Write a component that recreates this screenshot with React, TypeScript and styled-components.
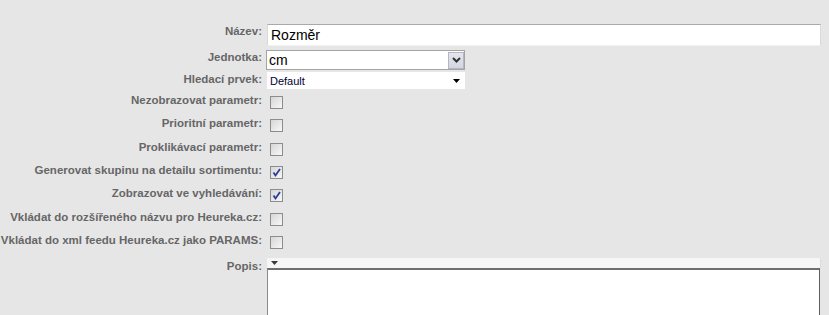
import { styled, createGlobalStyle } from 'styled-components'

const GlobalStyle = createGlobalStyle`
  html, body {
    margin: 0;
    padding: 0;
    background: #e6e6e6;
    font-family: 'Liberation Sans', Arial, sans-serif;
  }
`

type Flag = { label: string; checked: boolean }

const flags: Flag[] = [
  { label: 'Nezobrazovat parametr:', checked: false },
  { label: 'Prioritní parametr:', checked: false },
  { label: 'Proklikávací parametr:', checked: false },
  { label: 'Generovat skupinu na detailu sortimentu:', checked: true },
  { label: 'Zobrazovat ve vyhledávání:', checked: true },
  { label: 'Vkládat do rozšířeného názvu pro Heureka.cz:', checked: false },
  { label: 'Vkládat do xml feedu Heureka.cz jako PARAMS:', checked: false },
]

const App = () => {
  return (
    <Page>
      <GlobalStyle />
      <Row $h={26}>
        <Label>Název:</Label>
        <TextInput>Rozměr</TextInput>
      </Row>
      <Row $h={22}>
        <Label>Jednotka:</Label>
        <UnitSelect>
          <span>cm</span>
          <SelectButton>
            <svg width="9" height="6" viewBox="0 0 9 6">
              <path d="M1 1 L4.5 4.5 L8 1" fill="none" stroke="#333" strokeWidth="2" />
            </svg>
          </SelectButton>
        </UnitSelect>
      </Row>
      <Row $h={21}>
        <Label>Hledací prvek:</Label>
        <PlainSelect>
          <span>Default</span>
          <svg width="7" height="4" viewBox="0 0 7 4">
            <path d="M0 0 H7 L3.5 4 Z" fill="#000" />
          </svg>
        </PlainSelect>
      </Row>
      {flags.map((item, idx) => (
        <Row key={idx} $h={23.33}>
          <Label>{item.label}</Label>
          <Check checked={item.checked} />
        </Row>
      ))}
      <Row $h={60} style={{ marginTop: 2 }}>
        <Label $top={1}>Popis:</Label>
        <Editor>
          <Toolbar>
            <svg width="7" height="4" viewBox="0 0 7 4">
              <path d="M0 0 H7 L3.5 4 Z" fill="#3a3a3a" />
            </svg>
          </Toolbar>
          <EditArea />
        </Editor>
      </Row>
    </Page>
  )
}

const Check = ({ checked }: { checked: boolean }) => (
  <Box>
    {checked && (
      <svg width="11" height="11" viewBox="0 0 11 11">
        <path d="M2.5 5.5 L4.5 8.5 L9 2" fill="none" stroke="#2b3d92" strokeWidth="1.8" />
      </svg>
    )}
  </Box>
)

export default App

const Page = styled.div`
  padding: 24px 8px 0 0;
  height: 291px;
  overflow: hidden;
`

const Row = styled.div<{ $h: number }>`
  display: grid;
  grid-template-columns: 262px 1fr;
  column-gap: 4px;
  align-items: start;
  height: ${props => props.$h}px;
`

const Label = styled.div<{ $top?: number }>`
  text-align: right;
  font-size: 11.5px;
  line-height: 14px;
  font-weight: bold;
  color: #666666;
  white-space: nowrap;
  padding-top: ${props => props.$top ?? 0}px;
`

const TextInput = styled.div`
  margin-left: 1px;
  height: 20px;
  box-sizing: content-box;
  background: #ffffff;
  border: 1px solid;
  border-color: #a9a9a9 #dadada #f2f2f2 #dadada;
  font-size: 14px;
  line-height: 20px;
  padding-left: 3px;
  color: #000;
`

const UnitSelect = styled.div`
  width: 197px;
  height: 18px;
  display: flex;
  align-items: center;
  justify-content: space-between;
  background: #ffffff;
  border: 1px solid #a3a3a3;
  font-size: 14px;
  color: #000;

  > span {
    padding-left: 2px;
    line-height: 18px;
  }
`

const SelectButton = styled.div`
  width: 16px;
  height: 17px;
  display: flex;
  align-items: center;
  justify-content: center;
  background: linear-gradient(#e4e6ee, #d3d6e0);
  border: 1px solid #b4b7c2;
  box-sizing: border-box;
`

const PlainSelect = styled.div`
  margin-left: 1px;
  width: 198px;
  height: 17px;
  box-sizing: border-box;
  display: flex;
  align-items: center;
  justify-content: space-between;
  background: #ffffff;
  padding: 0 5px 0 3px;
  font-size: 11px;
  color: #000033;
`

const Box = styled.div`
  margin: 3px 0 0 4px;
  width: 13px;
  height: 13px;
  box-sizing: border-box;
  border: 1px solid #8c8c8c;
  background: linear-gradient(135deg, #d6d6d6, #f7f7f7);
  display: flex;
  align-items: center;
  justify-content: center;
`

const Editor = styled.div`
  margin-left: 1px;
  display: flex;
  flex-direction: column;
`

const Toolbar = styled.div`
  height: 10px;
  background: #f6f6f6;
  border-right: 1px solid #dcdcdc;
  padding-left: 4px;
  display: flex;
  align-items: center;
`

const EditArea = styled.div`
  height: 60px;
  background: #ffffff;
  border-top: 2px solid #6e6e6e;
  border-left: 1px solid #8a8a8a;
  border-right: 1px solid #5e5e5e;
  margin-right: 1px;
`
